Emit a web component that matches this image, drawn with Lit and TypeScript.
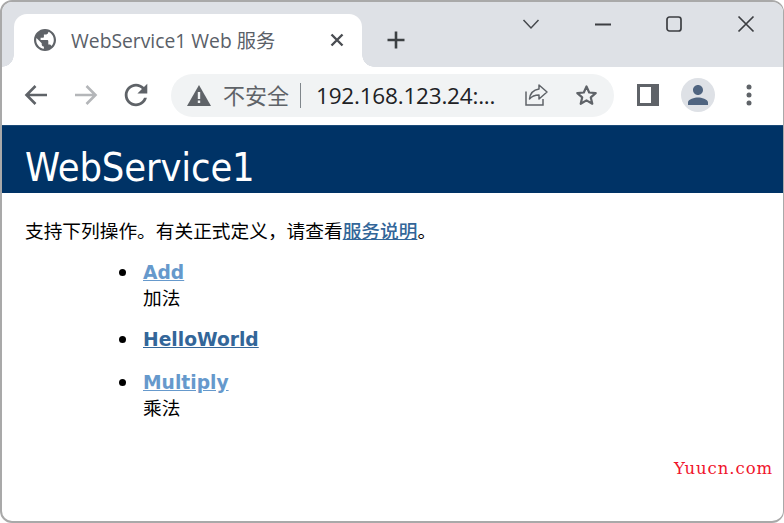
import { LitElement, html, css } from "lit";
import { customElement } from "lit/decorators.js";

@customElement("app-root")
export class AppRoot extends LitElement {
  static styles = css`
    :host { display: block; width: 784px; height: 523px; background: #fff; overflow: hidden; }
    * { box-sizing: border-box; }
    .win { position: relative; width: 784px; height: 523px; background: #fff; border: 2px solid #a9a9a9; border-radius: 12px; overflow: hidden; display: flex; flex-direction: column; border-right-width: 1px; }
    .strip { height: 66px; margin-top: -1px; background: #dee1e6; display: flex; padding-left: 12px; flex: none; }
    .tab { position: relative; width: 348px; height: 53px; margin-top: 13px; background: #fff; border-radius: 13px 13px 0 0; display: flex; align-items: center; padding: 0 18px 2px 20px; flex: none; }
    .tab::before, .tab::after { content: ""; position: absolute; bottom: 0; width: 12px; height: 12px; background: radial-gradient(circle at 0 0, #dee1e6 11.5px, #fff 12px); }
    .tab::before { left: -12px; }
    .tab::after { right: -12px; background: radial-gradient(circle at 100% 0, #dee1e6 11.5px, #fff 12px); }
    .tab-title { margin-left: 15px; font: 19.3px "Open Sans", "Noto Sans CJK SC", sans-serif; color: #5a6068; flex: 1; white-space: nowrap; }
    .plus { margin: 27px 0 0 22px; width: 24px; height: 24px; flex: none; }
    .winctl { margin-left: auto; height: 45px; display: flex; align-items: center; gap: 55px; padding-right: 28px; }
    .winctl svg { display: block; flex: none; }
    .toolbar { height: 58px; flex: none; display: flex; align-items: center; background: #fff; padding: 0 0 2px 22px; }
    .toolbar svg { display: block; flex: none; }
    .back { margin-right: 26px; }
    .fwd { margin-right: 26px; }
    .omni { margin-left: 23px; width: 443px; height: 43px; border-radius: 22px; background: #f1f3f4; display: flex; align-items: center; padding-left: 16px; flex: none; }
    .insecure { margin-left: 12px; width: 66px; padding-bottom: 2px; font: 22px "Noto Sans CJK SC", sans-serif; color: #5f6368; white-space: nowrap; }
    .sep { width: 1px; height: 25px; background: #80868b; margin: 0 15px 0 11px; flex: none; }
    .url { font: 22.5px "Open Sans", sans-serif; color: #202124; white-space: nowrap; width: 196px; flex: none; letter-spacing: -0.2px; }
    .share { margin-left: 12px; }
    .star { margin-left: 26px; }
    .side { margin-left: 23px; }
    .avatar { margin-left: 22px; width: 34px; height: 34px; border-radius: 50%; background: #dee1e6; display: flex; align-items: center; justify-content: center; flex: none; }
    .dots { margin-left: 31px; }
    .head { height: 68px; flex: none; background: #003366; color: #fff; padding: 14px 0 0 23px; font: 39.5px "DejaVu Sans", sans-serif; font-stretch: condensed; line-height: 54px; letter-spacing: -0.15px; white-space: nowrap; border-top: 1px solid #1b4a78; }
    .body { padding-left: 23px; color: #000; }
    .intro { margin: 0; padding-top: 25px; font: 18.7px/24px "Noto Sans CJK SC", sans-serif; }
    .intro a { color: #336699; font-weight: 500; text-decoration: underline; }
    ul { margin: 19px 0 0 0; padding: 0 0 0 94px; list-style: none; }
    li { margin-bottom: 19px; display: grid; grid-template-columns: 7px 1fr; column-gap: 17px; }
    .bullet { width: 7px; height: 7px; margin-top: 8px; border-radius: 50%; background: #000; }
    .op { font: bold 18.7px/24px "DejaVu Sans", sans-serif; text-decoration: underline; display: block; height: 24px; grid-column: 2; grid-row: 1; }
    .visited { color: #6699cc; }
    .link { color: #336699; }
    .desc { display: block; grid-column: 2; font: 18.7px/24px "Noto Sans CJK SC", sans-serif; height: 24px; }
    .mark { position: absolute; left: 672px; top: 457px; font: 16.5px "DejaVu Serif", serif; color: #f0142c; letter-spacing: 0.95px; white-space: nowrap; }
  `;

  render() {
    const ink = "#5f6368";
    return html`
      <div class="win">
        <div class="strip">
          <div class="tab">
            <svg width="22" height="22" viewBox="2 2 20 20"><path d="M12 2C6.480 2 2 6.480 2 12s4.480 10 10 10 10-4.480 10-10S17.520 2 12 2zm-1 17.930c-3.950-.49-7-3.850-7-7.930 0-.62.08-1.210.21-1.790L9 15v1c0 1.100.9 2 2 2v1.930zm6.900-2.540c-.26-.81-1-1.390-1.900-1.390h-1v-3c0-.55-.45-1-1-1H8v-2h2c.55 0 1-.45 1-1V7h2c1.100 0 2-.9 2-2v-.41c2.930 1.190 5 4.060 5 7.410 0 2.080-.8 3.970-2.100 5.390z" fill="${ink}"/></svg>
            <span class="tab-title">WebService1 Web 服务</span>
            <svg width="14" height="14" viewBox="0 0 14 14"><path d="M1.500 1.500l11 11M12.500 1.500l-11 11" stroke="#4a4d52" stroke-width="2.400" fill="none"/></svg>
          </div>
          <svg class="plus" viewBox="0 0 24 24"><path d="M12 3.500v17M3.500 12h17" stroke="#3c4043" stroke-width="2.600" fill="none"/></svg>
          <div class="winctl">
            <svg width="18" height="12" viewBox="0 0 18 12"><path d="M1.500 2l7.500 8 7.500-8" stroke="#45484c" stroke-width="1.500" fill="none"/></svg>
            <svg width="16" height="16" viewBox="0 0 16 16"><path d="M0 8.500h16" stroke="#3c3e42" stroke-width="2" fill="none"/></svg>
            <svg width="16" height="16" viewBox="0 0 16 16"><rect x="1" y="1" width="14" height="14" rx="2.500" stroke="#3c3e42" stroke-width="1.700" fill="none"/></svg>
            <svg width="18" height="18" viewBox="0 0 18 18"><path d="M1.500 1.500l15 15M16.500 1.500l-15 15" stroke="#3c3e42" stroke-width="1.700" fill="none"/></svg>
          </div>
        </div>
        <div class="toolbar">
          <svg class="back" width="24" height="22" viewBox="0 0 24 22"><path d="M23 11H3M11.500 2L2.500 11l9 9" stroke="${ink}" stroke-width="2.600" fill="none"/></svg>
          <svg class="fwd" width="24" height="22" viewBox="0 0 24 22"><path d="M1 11h20M12.500 2l9 9-9 9" stroke="#b4b6b9" stroke-width="2.600" fill="none"/></svg>
          <svg width="24" height="24" viewBox="3.500 3.500 17 17"><path d="M17.650 6.350C16.200 4.900 14.210 4 12 4c-4.420 0-7.990 3.580-7.990 8s3.570 8 7.990 8c3.730 0 6.840-2.550 7.730-6h-2.080c-.82 2.330-3.040 4-5.650 4-3.310 0-6-2.690-6-6s2.690-6 6-6c1.660 0 3.140.69 4.220 1.780L13 11h7V4l-2.350 2.350z" fill="${ink}"/></svg>
          <div class="omni">
            <svg width="24" height="21" viewBox="0 0 24 21"><path d="M12 0L24 21H0z" fill="${ink}"/><path d="M10.800 7h2.400v7h-2.400zM10.800 15.500h2.400v2.400h-2.400z" fill="#f1f3f4"/></svg>
            <span class="insecure">不安全</span>
            <span class="sep"></span>
            <span class="url">192.168.123.24:...</span>
            <svg class="share" width="25" height="24" viewBox="0 0 25 24"><path d="M2 8.500V22h17v-6" stroke="${ink}" stroke-width="1.500" fill="none"/><path d="M15 2l8 7-8 7v-4c-4 0-7 1-9.500 4 .5-5 3.500-9 9.500-10z" stroke="${ink}" stroke-width="1.500" fill="none" stroke-linejoin="round"/></svg>
            <svg class="star" width="23" height="22" viewBox="0 0 23 22"><path d="M11.500 2.500l2.700 6 6.500.6-4.900 4.300 1.500 6.400-5.800-3.400-5.800 3.400 1.500-6.400-4.900-4.300 6.500-.6z" stroke="${ink}" stroke-width="2.200" fill="none" stroke-linejoin="round"/></svg>
          </div>
          <svg class="side" width="22" height="22" viewBox="0 0 22 22"><path d="M0 0h22v22H0z" fill="${ink}"/><path d="M3 3h11v16H3z" fill="#fff"/></svg>
          <div class="avatar">
            <svg width="20" height="20" viewBox="4 4 16 16"><path d="M12 12c2.210 0 4-1.790 4-4s-1.790-4-4-4-4 1.790-4 4 1.790 4 4 4zm0 2c-2.670 0-8 1.340-8 4v2h16v-2c0-2.660-5.330-4-8-4z" fill="#4f6480"/></svg>
          </div>
          <svg class="dots" width="6" height="22" viewBox="0 0 6 22"><circle cx="3" cy="3" r="2.500" fill="${ink}"/><circle cx="3" cy="11" r="2.500" fill="${ink}"/><circle cx="3" cy="19" r="2.500" fill="${ink}"/></svg>
        </div>
        <div class="head">WebService1</div>
        <div class="body">
          <p class="intro">支持下列操作。有关正式定义&#xFF0C;请查看<a>服务说明</a>。</p>
          <ul>
            <li><span class="bullet"></span><a class="op visited">Add</a><span class="desc">加法</span></li>
            <li><span class="bullet"></span><a class="op link">HelloWorld</a></li>
            <li><span class="bullet"></span><a class="op visited">Multiply</a><span class="desc">乘法</span></li>
          </ul>
        </div>
        <div class="mark">Yuucn.com</div>
      </div>
    `;
  }
}
